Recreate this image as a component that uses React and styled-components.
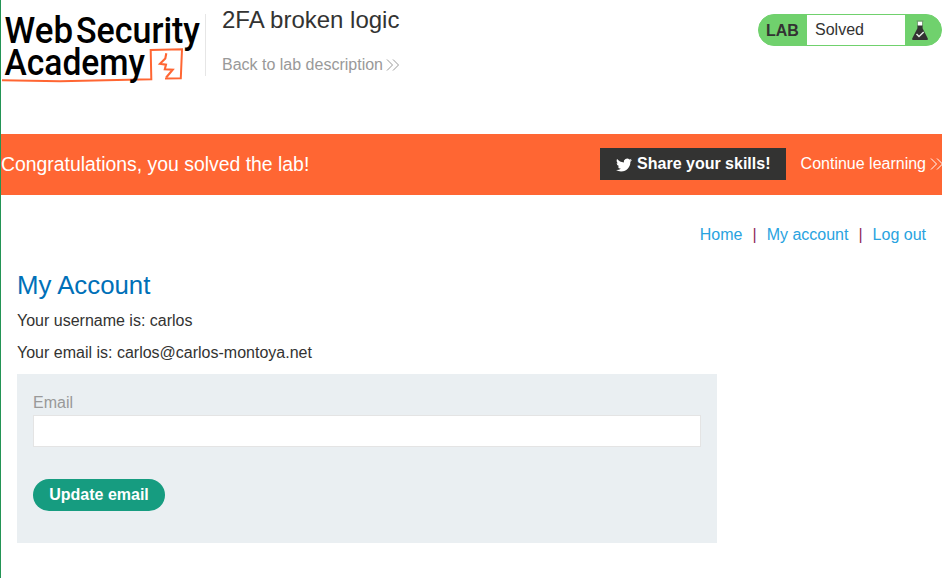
import React from "react";
import styled, { createGlobalStyle } from "styled-components";

const GlobalStyle = createGlobalStyle`
  * { box-sizing: border-box; }
  body {
    margin: 0;
    background: #fff;
    color: #333332;
    font: 16px/24px "Liberation Sans", Arial, sans-serif;
    overflow: hidden;
  }
  a { text-decoration: none; color: inherit; }
  h1, h2, h4, p { margin: 0; font-weight: 400; }
`;

const Page = styled.div`
  height: 578px;
  border-left: 1px solid #239455;
`;

const Header = styled.header`
  display: flex;
  height: 134px;
`;

const LogoSvg = styled.svg`
  display: block;
  flex: none;
  overflow: visible;
`;

const LogoText = styled.text`
  font-family: Roboto, sans-serif;
  font-weight: 500;
  font-size: 37.5px;
  fill: #000;
`;

const TitleBlock = styled.div`
  height: 62px;
  margin-top: 14px;
  padding-left: 16px;
  border-left: 1px solid #e6e6e6;
`;

const Title = styled.h2`
  margin-top: -10px;
  font-size: 24px;
  line-height: 32px;
  white-space: nowrap;
`;

const ArrowLink = styled.a`
  display: flex;
  align-items: center;
  gap: ${(p) => p.$gap}px;
  color: ${(p) => p.$color};
  white-space: nowrap;
`;

const BackRow = styled.div`
  margin-top: 17px;
`;

const LabStatus = styled.div`
  display: flex;
  flex: none;
  width: 184px;
  height: 32px;
  margin: 14px 0 0 auto;
  border: 1px solid #70d16d;
  border-radius: 16px;
  background: #70d16d;
  overflow: hidden;
`;

const LabTag = styled.span`
  width: 48px;
  padding-left: 7px;
  font-weight: 700;
  line-height: 31px;
`;

const LabState = styled.p`
  width: 98px;
  padding-left: 8px;
  background: #fff;
  line-height: 29px;
`;

const LabIcon = styled.svg`
  margin: 5px 0 0 6px;
`;

const Banner = styled.section`
  display: flex;
  align-items: center;
  height: 61px;
  padding-bottom: 1px;
  background: #ff6633;
  color: #fff;
  overflow: hidden;
`;

const BannerTitle = styled.h4`
  flex: 1;
  font-size: 19.4px;
  white-space: nowrap;
`;

const ShareButton = styled.a`
  display: flex;
  align-items: center;
  gap: 5.5px;
  width: 186px;
  height: 32px;
  margin-right: 15px;
  padding: 0 0 0 16px;
  background: #333332;
  font-weight: 700;
  white-space: nowrap;
`;

const BirdIcon = styled.svg`
  flex: none;
  margin-top: 1px;
`;

const NextLink = styled(ArrowLink)`
  margin-right: -2px;
`;

const Nav = styled.nav`
  display: flex;
  justify-content: flex-end;
  gap: 10px;
  padding: 28px 16px 0;
  color: #8f2b57;
`;

const NavLink = styled.a`
  color: #29a3e0;
`;

const Account = styled.main`
  width: 716px;
  padding: 22px 0 0 16px;
`;

const AccountTitle = styled.h1`
  color: #0070b8;
  font-size: 25.8px;
  line-height: 32px;
`;

const Detail = styled.p`
  margin-top: 8px;
`;

const Form = styled.form`
  height: 169px;
  margin-top: 9px;
  padding: 17px 16px 16px;
  background: #eaeff2;
`;

const Label = styled.label`
  display: block;
  height: 24px;
  color: #999;
`;

const Input = styled.input`
  display: block;
  width: 100%;
  height: 32px;
  padding: 0 8px;
  border: 1px solid #e4e4e4;
  background: #fff;
  font: inherit;
  outline: 0;
`;

const SubmitButton = styled.button`
  width: 132px;
  height: 32px;
  margin-top: 32px;
  padding: 0 0 1px;
  border: 0;
  border-radius: 16px;
  background: #169c80;
  color: #fff;
  font: 700 16px "Liberation Sans", Arial, sans-serif;
`;

function Logo() {
  return (
    <LogoSvg width="204" height="90" viewBox="1 0 204 90" role="img" aria-label="Web Security Academy">
      <path d="M2 80.2 L60 81.2 L140 79.6 L151.3 79.2 L150.7 50 L182 49.2 L180.8 78.2 L165 78.6" fill="none" stroke="#ff6633" strokeWidth="2" />
      <LogoText x="4.5" y="42.5" textLength="68.5" lengthAdjust="spacingAndGlyphs">Web</LogoText>
      <LogoText x="76" y="42.5" textLength="124" lengthAdjust="spacingAndGlyphs">Security</LogoText>
      <LogoText x="4.5" y="75" textLength="140.5" lengthAdjust="spacingAndGlyphs">Academy</LogoText>
      <path d="M166.3 53.3 L165.3 58.5 L160 63.7 L166 64.6 L164.8 69.3 L172.7 69.7 L166.2 77.5" fill="none" stroke="#ff6633" strokeWidth="2.1" />
    </LogoSvg>
  );
}

function Arrows() {
  return (
    <svg width="14" height="14" viewBox="0 0 14 14" fill="none" stroke="currentColor" strokeWidth="1">
      <path d="M1 1.5 L6.5 7 L1 12.5 M7 1.5 L12.5 7 L7 12.5" />
    </svg>
  );
}

function Flask() {
  return (
    <LabIcon width="18" height="22" viewBox="0 0 18 22">
      <path d="M6.7 1.5 H11.3 V6 H6.7Z" fill="#fff" />
      <path d="M5.5 .5 H12.5 V1.5 H5.5Z M6.2 1.5 H7 V6 H6.2Z M11 1.5 H11.8 V6 H11Z" fill="#6f946d" />
      <path d="M6.4 5.5 H11.6 V8.2 L16.8 18.5 Q17.3 20 15.8 20 H2.2 Q.7 20 1.2 18.5 L6.4 8.2Z" fill="#333332" />
      <path d="M5.5 14 L8 16.5 L12.7 12" fill="none" stroke="#e6efe6" strokeWidth="1.5" />
    </LabIcon>
  );
}

function Bird() {
  return (
    <BirdIcon width="16" height="16" viewBox="0 0 24 24" fill="#fff">
      <path d="M23.95 4.57a10 10 0 0 1-2.82.77 4.96 4.96 0 0 0 2.16-2.72c-.95.55-2 .95-3.13 1.18a4.92 4.92 0 0 0-8.38 4.48C7.69 8.1 4.07 6.13 1.64 3.16a4.82 4.82 0 0 0-.66 2.48c0 1.71.87 3.21 2.19 4.1a4.9 4.9 0 0 1-2.23-.62v.06a4.92 4.92 0 0 0 3.95 4.83 5 5 0 0 1-2.21.09 4.94 4.94 0 0 0 4.6 3.42A9.87 9.87 0 0 1 0 19.54a13.99 13.99 0 0 0 7.56 2.21c9.05 0 14-7.5 14-13.98 0-.21 0-.42-.02-.63a9.94 9.94 0 0 0 2.41-2.57z" />
    </BirdIcon>
  );
}

export default function App() {
  return (
    <>
      <GlobalStyle />
      <Page>
        <Header>
          <Logo />
          <TitleBlock>
            <Title>2FA broken logic</Title>
            <BackRow>
              <ArrowLink href="#" $gap={3} $color="#999">Back to lab description<Arrows /></ArrowLink>
            </BackRow>
          </TitleBlock>
          <LabStatus>
            <LabTag>LAB</LabTag>
            <LabState>Solved</LabState>
            <Flask />
          </LabStatus>
        </Header>
        <Banner>
          <BannerTitle>Congratulations, you solved the lab!</BannerTitle>
          <ShareButton href="#"><Bird />Share your skills!</ShareButton>
          <NextLink href="#" $gap={4} $color="#fff">Continue learning<Arrows /></NextLink>
        </Banner>
        <Nav>
          <NavLink href="#">Home</NavLink>
          <span>|</span>
          <NavLink href="#">My account</NavLink>
          <span>|</span>
          <NavLink href="#">Log out</NavLink>
        </Nav>
        <Account>
          <AccountTitle>My Account</AccountTitle>
          <Detail>Your username is: carlos</Detail>
          <Detail>Your email is: carlos@carlos-montoya.net</Detail>
          <Form>
            <Label htmlFor="email">Email</Label>
            <Input id="email" type="email" />
            <SubmitButton type="button">Update email</SubmitButton>
          </Form>
        </Account>
      </Page>
    </>
  );
}
